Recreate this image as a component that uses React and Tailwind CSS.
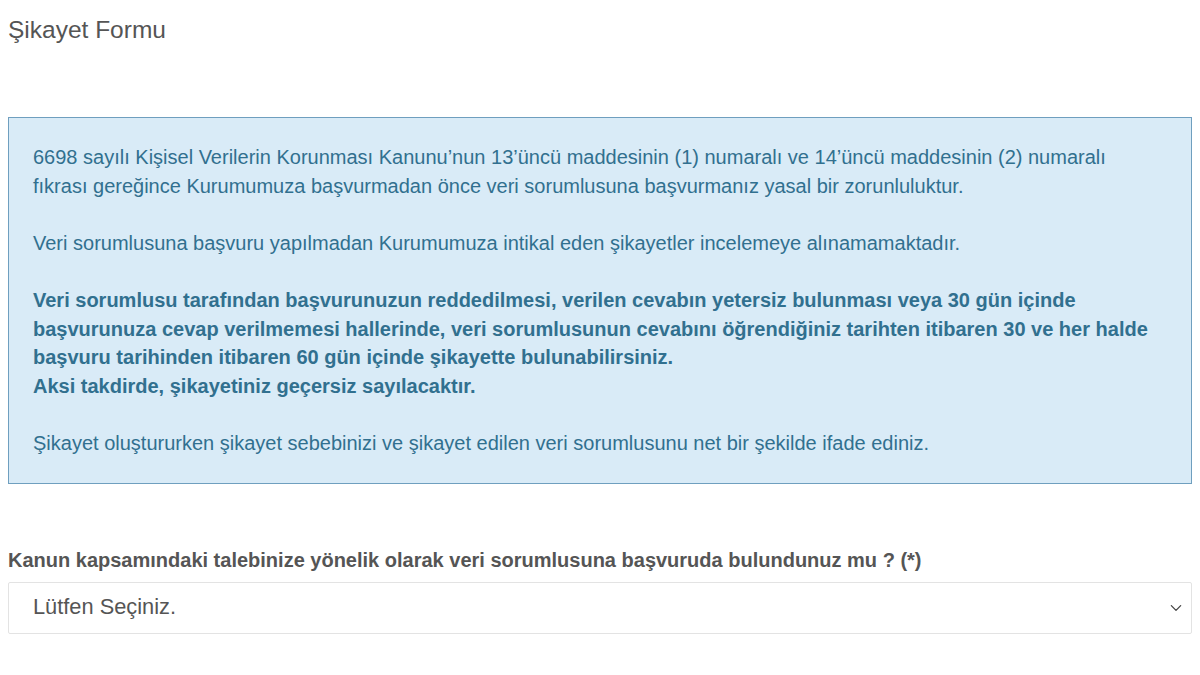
import React from "react";

export default function App() {
  return (
    <div className="w-[1200px] h-[675px] bg-white px-[8px] overflow-hidden" style={{ fontFamily: '"Liberation Sans", Arial, sans-serif' }}>
      <h1 className="pt-[15px] text-[24.5px] leading-[30px] text-[#555555] font-normal">Şikayet Formu</h1>
      <div className="mt-[72px] border border-[#6f9fbf] bg-[#d9ebf7] px-[24px] py-[25px] text-[20px] leading-[28.6px] text-[#31708f]">
        <p>
          6698 sayılı Kişisel Verilerin Korunması Kanunu’nun 13’üncü maddesinin (1) numaralı ve 14’üncü maddesinin (2) numaralı
          <br />
          fıkrası gereğince Kurumumuza başvurmadan önce veri sorumlusuna başvurmanız yasal bir zorunluluktur.
        </p>
        <p className="mt-[28.6px]">
          Veri sorumlusuna başvuru yapılmadan Kurumumuza intikal eden şikayetler incelemeye alınamamaktadır.
        </p>
        <p className="mt-[28.6px] font-bold">
          Veri sorumlusu tarafından başvurunuzun reddedilmesi, verilen cevabın yetersiz bulunması veya 30 gün içinde başvurunuza cevap verilmemesi hallerinde, veri sorumlusunun cevabını öğrendiğiniz tarihten itibaren 30 ve her halde başvuru tarihinden itibaren 60 gün içinde şikayette bulunabilirsiniz.
          <br />
          Aksi takdirde, şikayetiniz geçersiz sayılacaktır.
        </p>
        <p className="mt-[28.6px]">
          Şikayet oluştururken şikayet sebebinizi ve şikayet edilen veri sorumlusunu net bir şekilde ifade ediniz.
        </p>
      </div>
      <div className="mt-[62px] text-[20px] leading-[28px] font-bold text-[#555555]">
        Kanun kapsamındaki talebinize yönelik olarak veri sorumlusuna başvuruda bulundunuz mu ? (*)
      </div>
      <div className="mt-[8px] h-[52px] border border-[#e3e3e3] rounded-[2px] flex items-center justify-between pl-[24px] pr-[8px] text-[21.8px] text-[#555555]">
        <span>Lütfen Seçiniz.</span>
        <svg width="14" height="14" viewBox="0 0 24 24" fill="none" stroke="#444" strokeWidth="2.2" strokeLinecap="round" strokeLinejoin="round">
          <path d="M4 8l8 8 8-8" />
        </svg>
      </div>
    </div>
  );
}
